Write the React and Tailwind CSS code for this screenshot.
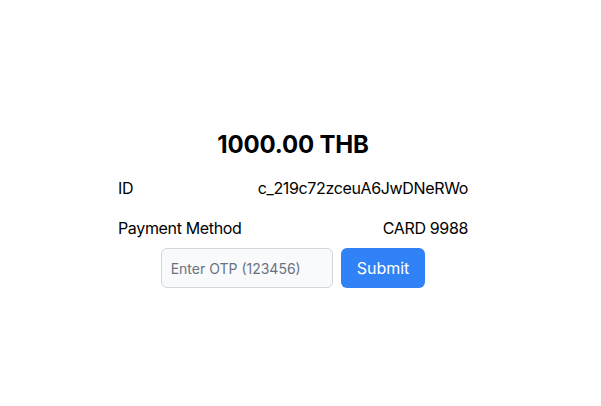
export default function App() {
  return (
    <div className="w-[586px] h-[406px] bg-white font-['Inter',sans-serif] text-black">
      <div className="pt-[129px] flex flex-col items-center">
        <h1 className="text-2xl font-bold leading-8 mb-[7px] tracking-[-0.008em]">1000.00 THB</h1>
        <div className="w-[350px] tracking-[-0.022em]">
          <div className="flex justify-between py-2 text-base leading-6">
            <span>ID</span>
            <span>c_219c72zceuA6JwDNeRWo</span>
          </div>
          <div className="flex justify-between py-2 text-base leading-6">
            <span>Payment Method</span>
            <span>CARD 9988</span>
          </div>
        </div>
        <div className="flex gap-2">
          <input
            type="text"
            placeholder="Enter OTP (123456)"
            className="w-[172px] h-10 px-[9px] text-sm rounded-md border border-gray-300 bg-gray-50 placeholder:text-gray-500 outline-none"
          />
          <button className="h-10 px-4 rounded-md bg-[#3182f6] text-white text-base">Submit</button>
        </div>
      </div>
    </div>
  );
}
